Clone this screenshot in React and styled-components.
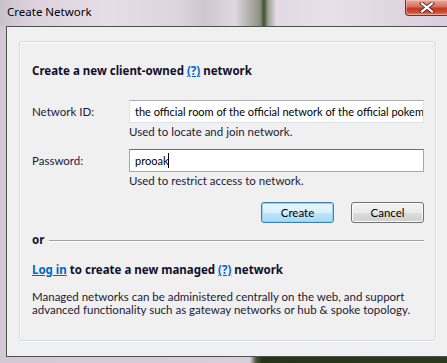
import React from 'react'
import styled, { createGlobalStyle } from 'styled-components';

const GlobalStyle = createGlobalStyle`
html, body {
    margin: 0;
    padding: 0;
    width: 447px;
    height: 363px;
    overflow: hidden;
    background: #2b3b20;
}
`

const CloseGlyph = () => (
    <svg width="16" height="11" viewBox="0 0 16 11">
        <path d="M3 1.5 L13 9.5 M13 1.5 L3 9.5" stroke="#5a2a24" strokeWidth="4" strokeLinecap="square"/>
        <path d="M3 1.5 L13 9.5 M13 1.5 L3 9.5" stroke="#ffffff" strokeWidth="2.2" strokeLinecap="square"/>
    </svg>
)

const App = () => {
    return (
        <Window>
            <GlobalStyle/>
            <TitleBar>
                <Title>Create Network</Title>
                <CloseButton><CloseGlyph/></CloseButton>
            </TitleBar>

            <Frame>
                <Client>
                    <Panel>
                        <Heading>Create a new client-owned <Link>(?)</Link> network</Heading>

                        <Form>
                            <Label>Network ID:</Label>
                            <TextBox>the official room of the official network of the official pokem</TextBox>
                            <span/>
                            <Hint>Used to locate and join network.</Hint>

                            <Label spaced>Password:</Label>
                            <TextBox spaced focused>prooak<Caret/></TextBox>
                            <span/>
                            <Hint>Used to restrict access to network.</Hint>
                        </Form>

                        <Buttons>
                            <Button primary>Create</Button>
                            <Button>Cancel</Button>
                        </Buttons>

                        <OrRow>
                            <span>or</span>
                            <Rule/>
                        </OrRow>

                        <Heading login><Link>Log in</Link> to create a new managed <Link>(?)</Link> network</Heading>

                        <Paragraph>
                            Managed networks can be administered centrally on the web, and support<br/>
                            advanced functionality such as gateway networks or hub &amp; spoke topology.
                        </Paragraph>
                    </Panel>
                </Client>
            </Frame>
        </Window>
    )
}

export default App

const Window = styled.div`
width: 447px;
height: 363px;
display: flex;
flex-direction: column;
overflow: hidden;
font-family: Lato, 'Noto Sans', sans-serif;
font-size: 11.5px;
color: #1a1a38;
background: linear-gradient(90deg, #d4c8d6 0, #d8cdda 250px, #4a5a36 256px, #24331a 262px, #2a3a1e 447px);
`

const TitleBar = styled.div`
height: 26px;
flex-shrink: 0;
display: flex;
justify-content: space-between;
align-items: flex-start;
background: linear-gradient(90deg, #c9c1ca 0, #dcd2de 30px, #e6dde8 110px, #ddd3df 180px, #cfc6d1 205px, #e0d7e2 235px, #8d9280 260px, #3f5230 264px, #9aa08e 268px, #e2d9e4 276px, #e7dfe9 330px, #ded5e1 400px, #d9cfdc 447px);
`

const Title = styled.div`
padding: 4px 0 0 7px;
font-family: 'Noto Sans', sans-serif;
font-size: 11.5px;
line-height: 16px;
color: #000;
`

const CloseButton = styled.div`
width: 44px;
height: 16px;
margin-right: -2px;
box-sizing: border-box;
display: flex;
align-items: center;
justify-content: center;
border: 1px solid #6e3028;
border-top: none;
border-radius: 0 0 4px 4px;
background: linear-gradient(180deg, #e9a99c 0, #d8705c 45%, #c23a22 55%, #cc4a2c 80%, #e5836a 100%);
box-shadow: inset 0 0 0 1px rgba(255, 210, 200, 0.5);
`

const Frame = styled.div`
flex: 1;
display: flex;
flex-direction: column;
padding: 0 0 6px 6px;
`

const Client = styled.div`
flex: 1;
display: flex;
flex-direction: column;
margin-right: -3px;
background: #f0f0f0;
border: 1px solid #505050;
border-right: none;
`

const Panel = styled.div`
flex: 1;
margin: 14px 14px 15px 12px;
padding: 21px 11px 0 12px;
border: 1px solid #d3dce2;
border-radius: 3px;
box-shadow: inset 1px 1px 0 #fbfbfb, 1px 1px 0 #fbfbfb;
`

const Heading = styled.div`
font-family: 'Noto Sans', sans-serif;
font-size: 11.5px;
font-weight: bold;
line-height: 16px;
color: #10102a;
margin-top: ${props => props.login ? '15px' : '0'};
`

const Link = styled.span`
color: #0066cc;
text-decoration: underline;
`

const Form = styled.div`
display: grid;
grid-template-columns: 97px 1fr;
align-items: center;
margin-top: 21px;
`

const Label = styled.div`
line-height: 16px;
margin-top: ${props => props.spaced ? '10px' : '0'};
`

const TextBox = styled.div`
height: 23px;
box-sizing: border-box;
padding: 0 3px 0 5px;
margin-top: ${props => props.spaced ? '10px' : '0'};
font-size: 11px;
line-height: 21px;
white-space: nowrap;
overflow: hidden;
background: #fff;
color: #000;
border: 1px solid ${props => props.focused ? '#7fb1de' : '#dde3e9'};
border-top-color: ${props => props.focused ? '#3d7bad' : '#abadb3'};
`

const Caret = styled.span`
display: inline-block;
width: 1px;
height: 15px;
background: #000;
vertical-align: -3px;
`

const Hint = styled.div`
line-height: 14px;
margin-top: 2px;
`

const Buttons = styled.div`
display: flex;
justify-content: flex-end;
gap: 17px;
margin-top: 14px;
`

const Button = styled.div`
width: 73px;
height: 21px;
box-sizing: border-box;
display: flex;
align-items: center;
justify-content: center;
border-radius: 3px;
color: #000;
border: 1px solid ${props => props.primary ? '#3c7fb1' : '#707070'};
background: ${props => props.primary
    ? 'linear-gradient(180deg, #eaf6fd 0, #d9f0fc 50%, #bee6fd 51%, #a7d9f5 100%)'
    : 'linear-gradient(180deg, #f2f2f2 0, #ebebeb 50%, #dddddd 51%, #cfcfcf 100%)'};
box-shadow: inset 0 0 0 1px ${props => props.primary ? '#98d1ef' : '#fcfcfc'};
`

const OrRow = styled.div`
display: flex;
align-items: center;
gap: 5px;
margin-top: 10px;
font-family: 'Noto Sans', sans-serif;
font-weight: bold;
line-height: 14px;
color: #10102a;
`

const Rule = styled.div`
flex: 1;
height: 1px;
background: #a0a0a0;
box-shadow: 0 1px 0 #fff;
`

const Paragraph = styled.div`
margin-top: 12px;
line-height: 13px;
white-space: nowrap;
`
